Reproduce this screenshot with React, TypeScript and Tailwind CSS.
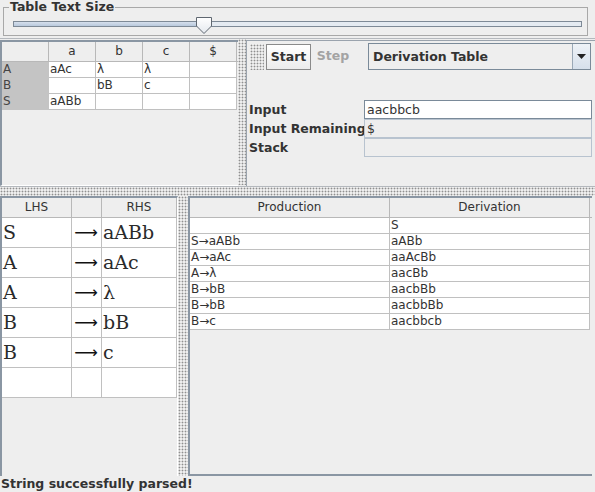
import React from "react";

const dots =
  "bg-[radial-gradient(circle,#8f8f8f_0.8px,transparent_1.1px)] bg-[length:3px_3px]";

const parseCols = ["", "a", "b", "c", "$"];
const parseRows = [
  ["A", "aAc", "λ", "λ", ""],
  ["B", "", "bB", "c", ""],
  ["S", "aABb", "", "", ""],
];

const grammar = [
  ["S", "aABb"],
  ["A", "aAc"],
  ["A", "λ"],
  ["B", "bB"],
  ["B", "c"],
  ["", ""],
];

const derivation = [
  ["", "S"],
  ["S→aABb", "aABb"],
  ["A→aAc", "aaAcBb"],
  ["A→λ", "aacBb"],
  ["B→bB", "aacbBb"],
  ["B→bB", "aacbbBb"],
  ["B→c", "aacbbcb"],
];

const fields: [string, string, boolean][] = [
  ["Input", "aacbbcb", true],
  ["Input Remaining", "$", false],
  ["Stack", "", false],
];

function SliderThumb() {
  return (
    <svg width="16" height="17" viewBox="0 0 16 17" className="absolute left-[182px] top-[-5px]">
      <defs>
        <linearGradient id="thumb" x1="0" y1="0" x2="0" y2="1">
          <stop offset="0" stopColor="#ffffff" />
          <stop offset="1" stopColor="#e4e8ee" />
        </linearGradient>
      </defs>
      <path d="M0.5 0.5 H15.5 V9 L8 16.5 L0.5 9 Z" fill="url(#thumb)" stroke="#5f6770" />
    </svg>
  );
}

export default function App() {
  return (
    <div className="w-[595px] h-[492px] bg-[#eeeeee] flex flex-col overflow-hidden font-['DejaVu_Sans',sans-serif] text-[12px] text-[#333333]">
      {/* Table text size slider */}
      <div className="h-[38px]">
        <fieldset className="ml-[3px] mr-[7px] h-[36px] border border-[#a8a8a8] px-[5px]">
          <legend className="px-[1px] text-[12.5px] leading-[14px] font-bold text-[#333333]">
            Table Text Size
          </legend>
          <div className="relative ml-[4px] mt-[7px] w-[569px] h-[6px] border border-[#7d8996] bg-[#e4eaf1]">
            <div className="h-full w-[186px] bg-gradient-to-b from-[#d5dfec] to-[#b8c8dc]" />
            <SliderThumb />
          </div>
        </fieldset>
      </div>

      {/* Top split */}
      <div className="h-[148px] flex border-t border-[#b4b8bd] pt-[1px]">
        <div className="w-[238px] h-full border-t-2 border-l-2 border-[#8a96a3] border-b border-b-white">
          <div className="flex h-[20px] border-b border-[#b8b8b8]">
            {parseCols.map((c, i) => (
              <div
                key={i}
                className="w-[47px] h-full border-r border-[#b8b8b8] bg-[#eeeeee] text-center leading-[19px] text-[#333333]"
              >
                {c}
              </div>
            ))}
          </div>
          {parseRows.map((r, i) => (
            <div key={i} className="flex h-[16px]">
              {r.map((c, j) => (
                <div
                  key={j}
                  className={
                    j === 0
                      ? "w-[47px] h-full bg-[#c4c4c4] pl-[1px] leading-[15px] text-[#444]"
                      : "w-[47px] h-full bg-white border-r border-b border-[#c0c0c0] pl-[1px] leading-[15px]"
                  }
                >
                  {c}
                </div>
              ))}
            </div>
          ))}
        </div>

        <div className={`w-[8px] h-full mt-[-1px] ${dots}`} />

        <div className="flex-1 border-t border-l border-[#9aa3ad] flex flex-col">
          {/* toolbar */}
          <div className="flex items-center h-[30px] pt-[1px]">
            <div className={`ml-[3px] w-[14px] h-[26px] ${dots}`} />
            <div className="ml-[2px] w-[45px] h-[26px] border border-[#8a8a8a] bg-gradient-to-b from-white to-[#ececec] text-center font-bold text-[12.5px] leading-[24px] text-[#333]">
              Start
            </div>
            <div className="w-[44px] h-[26px] text-center font-bold text-[12.5px] leading-[24px] text-[#a3a3a3]">
              Step
            </div>
            <div className="ml-[13px] w-[223px] h-[27px] border border-[#7a8a99] bg-[#eeeeee] flex">
              <div className="flex-1 pl-[4px] font-bold text-[12.5px] leading-[25px] text-[#333]">
                Derivation Table
              </div>
              <div className="w-[18px] h-full border-l border-[#9aa8b6] bg-gradient-to-b from-[#eef2f7] to-[#d6e0eb] flex items-center justify-center">
                <svg width="9" height="5" viewBox="0 0 9 5">
                  <path d="M0 0 H9 L4.5 5 Z" fill="#222" />
                </svg>
              </div>
            </div>
          </div>

          {/* input fields */}
          <div className="mt-[29px] flex flex-col">
            {fields.map(([label, value, editable], i) => (
              <div key={i} className="flex h-[19px] items-center">
                <div className="w-[117px] pl-[2px] whitespace-nowrap font-bold text-[12.5px] leading-[19px] text-[#333]">
                  {label}
                </div>
                <div
                  className={
                    editable
                      ? "w-[228px] h-[19px] border border-[#7a8a99] bg-white pl-[2px] text-[12.5px] leading-[17px]"
                      : "w-[228px] h-[19px] border border-[#b8c3cf] bg-[#eeeeee] pl-[2px] text-[12.5px] leading-[17px]"
                  }
                >
                  {value}
                </div>
              </div>
            ))}
          </div>
        </div>
      </div>

      {/* horizontal divider */}
      <div className={`h-[10px] border-t border-[#b4b8bd] ${dots}`} />

      {/* Bottom split */}
      <div className="h-[280px] flex">
        <div className="w-[178px] h-full border-t-2 border-l-2 border-[#8a96a3] border-r border-r-white">
          <div className="flex h-[20px] border-b border-[#b8b8b8] bg-[#eeeeee]">
            <div className="w-[70px] border-r border-[#b8b8b8] text-center leading-[19px]">LHS</div>
            <div className="w-[30px] border-r border-[#b8b8b8]" />
            <div className="w-[75px] border-r border-[#b8b8b8] text-center leading-[19px]">RHS</div>
          </div>
          {grammar.map(([l, r], i) => (
            <div key={i} className="flex h-[30px] font-['DejaVu_Serif',serif] text-[19px] leading-[29px] text-[#2a2a2a]">
              <div className="w-[70px] bg-white border-r border-b border-[#c0c0c0] pl-[1px]">{l}</div>
              <div className="w-[30px] bg-white border-r border-b border-[#c0c0c0] text-right pr-[3px] font-['DejaVu_Sans',sans-serif] text-[16.5px] leading-[29px] text-[#111]">
                {l ? "⟶" : ""}
              </div>
              <div className="w-[75px] bg-white border-r border-b border-[#c0c0c0] pl-[1px]">{r}</div>
            </div>
          ))}
        </div>

        <div className={`w-[10px] h-full ${dots}`} />

        <div className="w-[404px] h-full border-t-2 border-l-2 border-b-2 border-[#8a96a3]">
          <div className="flex h-[20px] border-b border-[#b8b8b8] bg-[#eeeeee]">
            <div className="w-[200px] border-r border-[#b8b8b8] text-center leading-[19px]">Production</div>
            <div className="w-[200px] border-r border-[#b8b8b8] text-center leading-[19px]">Derivation</div>
          </div>
          {derivation.map(([p, d], i) => (
            <div key={i} className="flex h-[16px] leading-[15px]">
              <div className="w-[200px] bg-white border-r border-b border-[#c0c0c0] pl-[1px]">{p}</div>
              <div className="w-[200px] bg-white border-r border-b border-[#c0c0c0] pl-[1px]">{d}</div>
            </div>
          ))}
        </div>
      </div>

      {/* status */}
      <div className="h-[16px] pl-[1px] font-bold text-[12.5px] leading-[16px] text-[#333]">
        String successfully parsed!
      </div>
    </div>
  );
}
